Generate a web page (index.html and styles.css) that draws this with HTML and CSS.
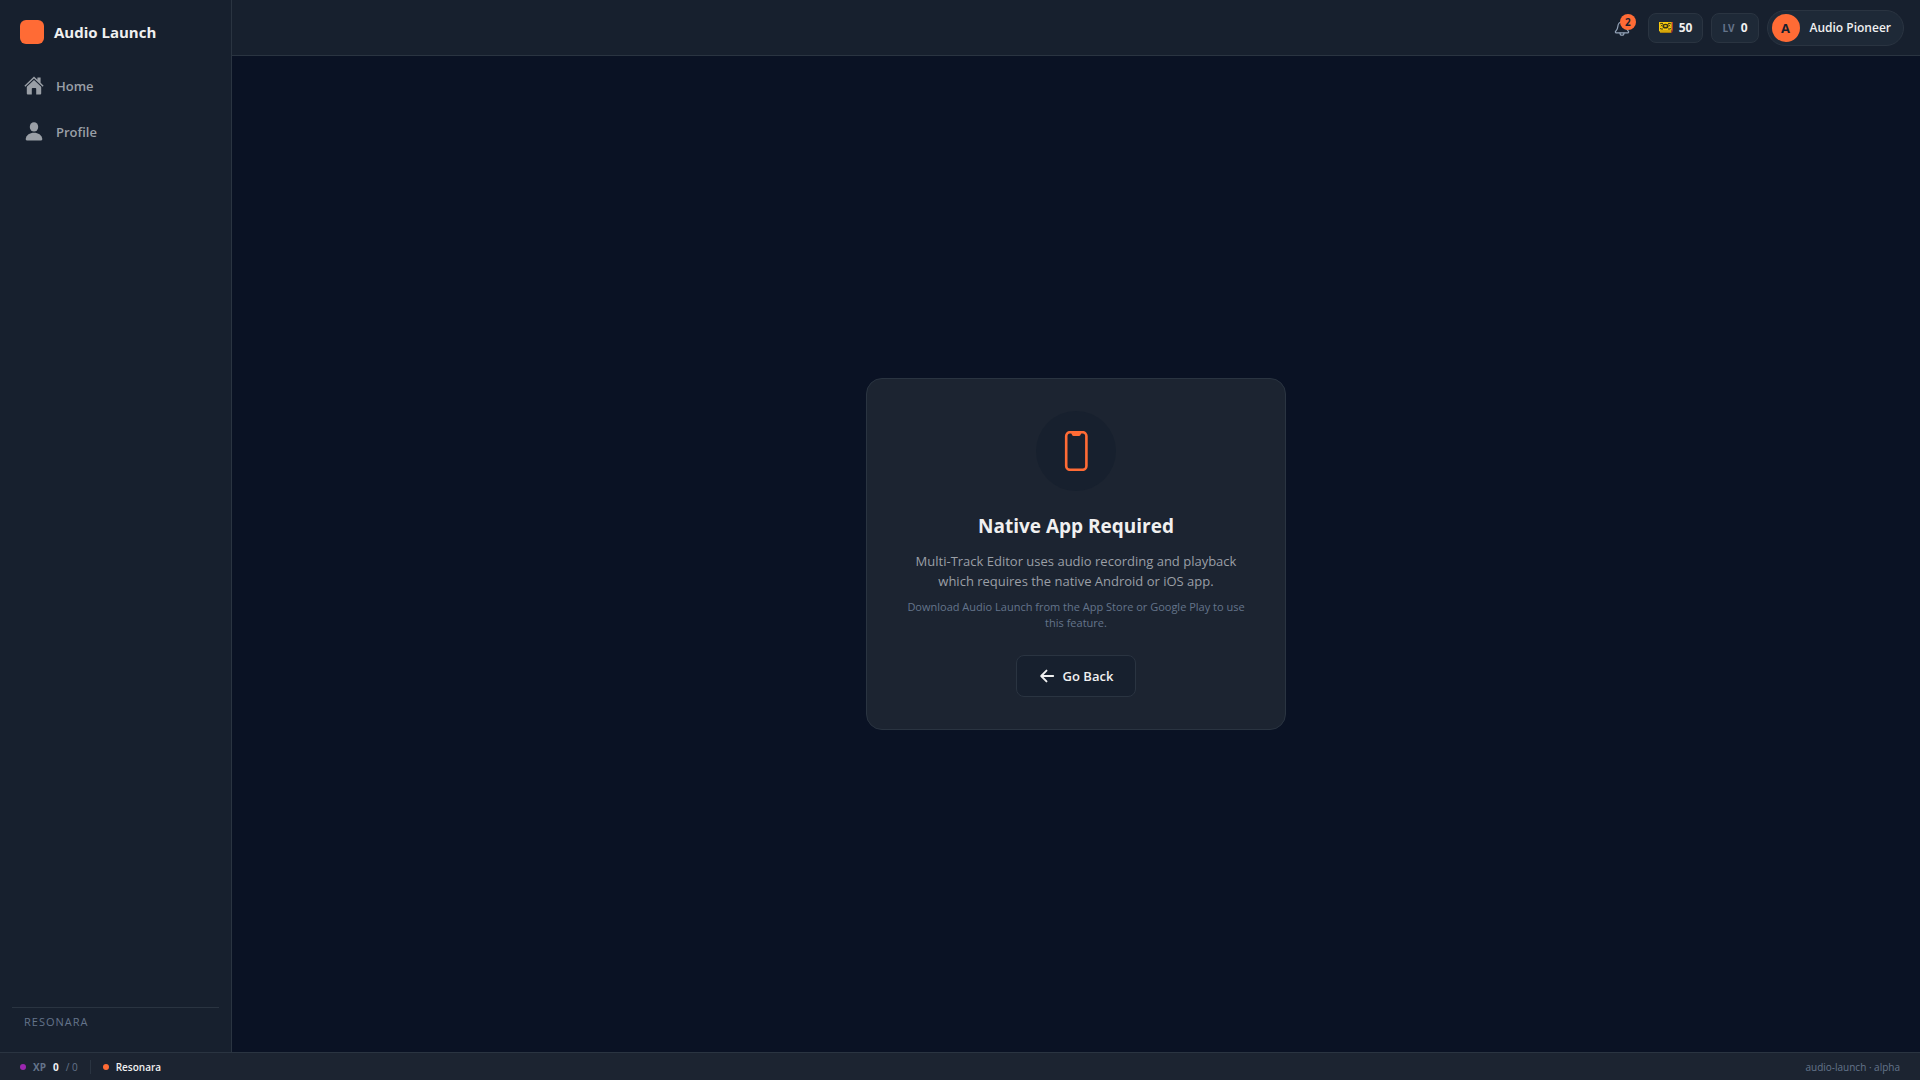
FILE: index.html
```html
<!DOCTYPE html>
<html lang="en">
  <head>
    <meta charset="utf-8" />
    <meta name="viewport" content="width=device-width, initial-scale=1" />
    <title>Audio Launch</title>
    <link rel="stylesheet" href="styles.css">
  </head>
  <body>
    <div class="app">
      <div class="shell">
        <aside class="sidebar">
          <div class="brand">
            <span class="brand-mark"></span>
            <span class="brand-name">Audio Launch</span>
          </div>
          <nav class="nav">
            <a class="nav-link" href="#home">
              <svg width="20" height="20" viewBox="0 0 20 20" fill="currentColor" aria-hidden="true">
                <path d="M10 .6 13.4 3.8V1.6H16.6V6.8L19.6 9.7 18.7 10.7 10 2.5 1.3 10.7.4 9.7Z" />
                <path d="M10 3.9 17.2 10.7V17.6Q17.2 18.6 16.2 18.6H12.2V12.8Q12.2 12 11.4 12H8.6Q7.8 12 7.8 12.8V18.6H3.8Q2.8 18.6 2.8 17.6V10.7Z" />
              </svg>
              Home
            </a>
            <a class="nav-link" href="#profile">
              <svg width="20" height="20" viewBox="0 0 20 20" fill="currentColor" aria-hidden="true">
                <ellipse cx="10" cy="4.9" rx="4.2" ry="4.7" />
                <path d="M1.7 17C2.3 13 5.8 10.8 10 10.8S17.7 13 18.3 17Q18.4 18.4 17.2 18.4H2.8Q1.6 18.4 1.7 17Z" />
              </svg>
              Profile
            </a>
          </nav>
          <div class="sidebar-footer">RESONARA</div>
        </aside>

        <div class="content">
          <header class="topbar">
            <button class="bell" type="button" aria-label="Notifications">
              <svg width="16" height="16" viewBox="0 0 16 16" fill="none" stroke="currentColor" stroke-width="1.2" stroke-linecap="round" stroke-linejoin="round" aria-hidden="true">
                <path d="M8 2C5 2 4 4.3 3.8 6.6 3.6 9.3 2.8 10 1.7 11.2 1 12 1.4 12.8 2.2 12.8H13.8C14.6 12.8 15 12 14.3 11.2 13.2 10 12.4 9.3 12.2 6.6 12 4.3 11 2 8 2Z" />
                <path d="M6 13C6 16 10 16 10 13" />
              </svg>
              <span class="badge">2</span>
            </button>
            <div class="chip">
              <svg width="14" height="14" viewBox="0 0 14 14" aria-hidden="true">
                <path d="M0 1H12.8V8.6L11.8 11.8H1.5L0 9.4Z" fill="#f6c90e" />
                <path d="M12.8 1H14V9L13 11.8H11.8L12.8 8.6Z" fill="#b4382c" />
                <path d="M1.2 10H12M2 11.5H11.4" stroke="#a87a08" stroke-width=".8" />
                <path d="M1.6 3.2V2.4H4M9 2.4H11.4V3.2M1.6 7.2V8H4M9 8H11.4V7.2M1.8 5.2 3.6 3.8M11.2 5.2 9.4 3.8" fill="none" stroke="#3b3514" />
                <ellipse cx="6.5" cy="5.2" rx="3" ry="2.4" fill="#3b3514" />
                <ellipse cx="6.5" cy="5" rx="1.5" ry="1.1" fill="#e8bd0b" />
              </svg>
              <span>50</span>
            </div>
            <div class="chip">
              <span class="chip-label">LV</span>
              <span>0</span>
            </div>
            <button class="user" type="button">
              <span class="avatar">A</span>
              Audio Pioneer
            </button>
          </header>

          <main class="main">
            <section class="card">
              <div class="card-icon">
                <svg width="24" height="40" viewBox="0 0 24 40" aria-hidden="true">
                  <rect x="2.2" y="1.2" width="20.2" height="37.6" rx="3.8" fill="none" stroke="currentColor" stroke-width="2.6" />
                  <path d="M6.7 2C8 2 7.6 4.9 9.5 4.9H15.1C17 4.9 16.6 2 17.9 2Z" fill="currentColor" />
                </svg>
              </div>
              <h1 class="card-title">Native App Required</h1>
              <p class="card-text">Multi-Track Editor uses audio recording and playback which requires the native Android or iOS app.</p>
              <p class="card-hint">Download Audio Launch from the App Store or Google Play to use this feature.</p>
              <button class="back" type="button">
                <svg width="16" height="16" viewBox="0 0 16 16" fill="none" stroke="currentColor" stroke-width="1.9" stroke-linecap="round" stroke-linejoin="round" aria-hidden="true">
                  <path d="M7.5 2.6 2.2 8 7.5 13.4M2.6 8H14.2" />
                </svg>
                Go Back
              </button>
            </section>
          </main>
        </div>
      </div>

      <footer class="statusbar">
        <div class="status-item">
          <span class="dot dot-xp"></span>
          <span class="status-label">XP</span>
          <strong>0</strong>
          <span class="muted">/ 0</span>
        </div>
        <span class="divider"></span>
        <div class="status-item">
          <span class="dot"></span>
          <span class="status-name">Resonara</span>
        </div>
        <span class="version">audio-launch · alpha</span>
      </footer>
    </div>
  </body>
</html>
```
FILE: styles.css
```css
* {
  box-sizing: border-box;
}
body {
  margin: 0;
  background-color: #0a1224;
  color: #f0f0f0;
  font-family: "Segoe UI", "Open Sans", "Noto Sans", sans-serif;
  font-size: 13px;
  line-height: 20px;
}
button {
  font: inherit;
  color: inherit;
  cursor: pointer;
}
svg {
  display: block;
  flex-shrink: 0;
}
.app {
  display: flex;
  flex-direction: column;
  min-height: 100vh;
}
.shell {
  display: flex;
  flex: 1;
}

/* Sidebar */
.sidebar {
  display: flex;
  flex-direction: column;
  width: 232px;
  flex-shrink: 0;
  padding: 20px 12px;
  background-color: #17202e;
  border-right: 1px solid #2a3441;
}
.brand {
  display: flex;
  align-items: center;
  gap: 10px;
  padding: 0 8px;
  height: 24px;
  margin-bottom: 20px;
}
.brand-mark {
  width: 24px;
  height: 24px;
  border-radius: 6px;
  background-color: #ff6b35;
}
.brand-name {
  font-size: 15px;
  font-weight: 700;
}
.nav {
  display: flex;
  flex-direction: column;
  gap: 2px;
}
.nav-link {
  display: flex;
  align-items: center;
  gap: 12px;
  height: 44px;
  padding: 0 12px;
  color: #9a9fa6;
  font-weight: 600;
  text-decoration: none;
}
.sidebar-footer {
  margin-top: auto;
  padding: 4px 12px 0;
  border-top: 1px solid #2a3441;
  color: #64748b;
  font-size: 11px;
  letter-spacing: 1px;
}

/* Top bar */
.content {
  display: flex;
  flex-direction: column;
  flex: 1;
}
.topbar {
  display: flex;
  align-items: center;
  justify-content: flex-end;
  gap: 8px;
  height: 56px;
  padding: 0 16px;
  background-color: #17202e;
  border-bottom: 1px solid #2a3441;
}
.bell {
  position: relative;
  padding: 10px;
  border: none;
  background: none;
  color: #94a3b8;
}
.badge {
  position: absolute;
  top: 4px;
  right: 4px;
  width: 16px;
  height: 16px;
  border-radius: 8px;
  background-color: #ff6b35;
  color: #17202e;
  font-size: 10px;
  font-weight: 700;
  line-height: 16px;
}
.chip {
  display: flex;
  align-items: center;
  gap: 6px;
  height: 30px;
  padding: 0 10px;
  border: 1px solid #2a3441;
  border-radius: 8px;
  background-color: #1e2937;
  font-size: 12px;
  font-weight: 700;
}
.chip-label {
  color: #64748b;
  font-size: 10px;
}
.user {
  display: flex;
  align-items: center;
  gap: 10px;
  height: 36px;
  padding: 0 12px 0 4px;
  border: 1px solid #2a3441;
  border-radius: 18px;
  background-color: #1e2937;
  font-size: 12px;
  font-weight: 600;
}
.avatar {
  width: 28px;
  height: 28px;
  border-radius: 50%;
  background-color: #ff6b35;
  color: #17202e;
  font-size: 13px;
  font-weight: 700;
  line-height: 28px;
}

/* Message card */
.main {
  display: flex;
  flex: 1;
  align-items: center;
  justify-content: center;
  padding: 24px;
}
.card {
  display: flex;
  flex-direction: column;
  align-items: center;
  width: 100%;
  max-width: 420px;
  padding: 32px;
  border: 1px solid #2a3441;
  border-radius: 16px;
  background-color: #1c2431;
  text-align: center;
}
.card-icon {
  display: flex;
  align-items: center;
  justify-content: center;
  width: 80px;
  height: 80px;
  margin-bottom: 20px;
  border-radius: 50%;
  background-color: #17202e;
  color: #ff6b35;
}
.card-title {
  margin: 0 0 10px;
  font-size: 19px;
  font-weight: 700;
  line-height: 30px;
}
.card-text {
  margin: 0 0 8px;
  color: #9a9fa6;
}
.card-hint {
  margin: 0 0 24px;
  color: #64748b;
  font-size: 11px;
  line-height: 16px;
}
.back {
  display: flex;
  align-items: center;
  gap: 8px;
  height: 42px;
  padding: 0 22px;
  border: 1px solid #2a3441;
  border-radius: 8px;
  background-color: #17202e;
  font-weight: 600;
}

/* Status bar */
.statusbar {
  display: flex;
  align-items: center;
  gap: 12px;
  height: 28px;
  padding: 0 20px;
  border-top: 1px solid #2a3441;
  background-color: #1c2431;
  font-size: 10px;
}
.status-item {
  display: flex;
  align-items: center;
  gap: 7px;
}
.dot {
  width: 6px;
  height: 6px;
  border-radius: 50%;
  background-color: #ff6b35;
}
.dot-xp {
  background-color: #9c27b0;
}
.status-label {
  color: #64748b;
  font-weight: 700;
}
.status-name {
  font-weight: 600;
}
.muted,
.version {
  color: #64748b;
}
.divider {
  width: 1px;
  height: 14px;
  background-color: #2a3441;
}
.version {
  margin-left: auto;
}
```
